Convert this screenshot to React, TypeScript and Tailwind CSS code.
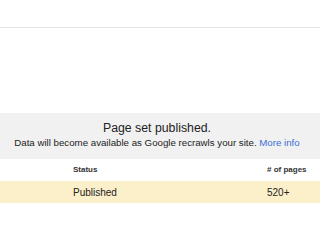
export default function App() {
  return (
    <div className="w-[320px] h-[240px] bg-white overflow-hidden font-['Liberation_Sans',Arial,sans-serif]">
      <div className="h-[27px]" />
      <div className="h-[1px] bg-[#e3e3e3]" />
      <div className="h-[85px]" />

      {/* notice banner */}
      <div className="bg-[#f1f1f1] h-[46px] flex flex-col items-center pt-[8px] pr-[6px]">
        <p className="text-[12.3px] leading-[15px] text-[#222]">Page set published.</p>
        <p className="text-[9.7px] leading-[12px] text-[#222] mt-[1px]">
          Data will become available as Google recrawls your site.{' '}
          <a href="#" className="text-[#3b6fd8]">More info</a>
        </p>
      </div>

      {/* table */}
      <div className="h-[22px] flex items-center text-[8px] font-bold text-[#333]">
        <span className="ml-[73px] w-[194px]">Status</span>
        <span>&#35; of pages</span>
      </div>
      <div className="h-[22px] bg-[#fbf0c9] flex items-center text-[10px] text-[#222]">
        <span className="ml-[73px] w-[194px]">Published</span>
        <span>520+</span>
      </div>
    </div>
  );
}
